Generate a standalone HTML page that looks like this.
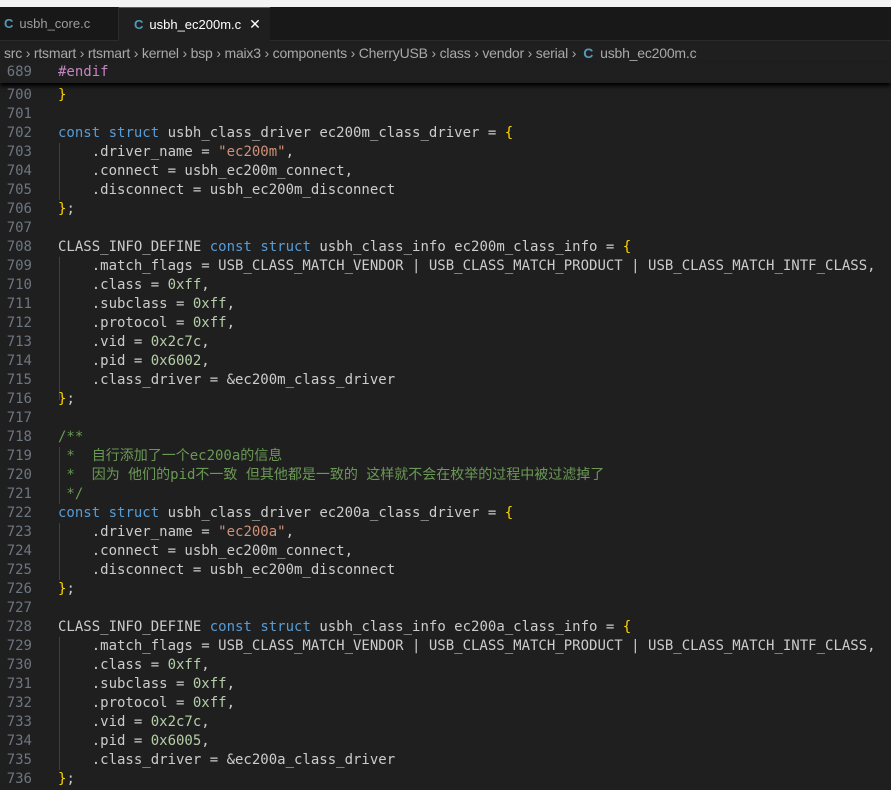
<!DOCTYPE html>
<html><head><meta charset="utf-8"><style>
*{margin:0;padding:0;box-sizing:border-box}
body{width:891px;height:790px;background:#1f1f1f;overflow:hidden;position:relative;font-family:"Liberation Sans","Noto Sans CJK SC",sans-serif}
.top{position:absolute;left:0;top:0;width:891px;height:7px;background:#f3f3f3}
.tabs{position:absolute;left:0;top:7px;width:891px;height:34px;background:#181818;border-bottom:1px solid #2b2b2b}
.tab{position:absolute;top:0;height:34px;font-size:13px;color:#9d9d9d;line-height:34px;padding-left:4px}
.tab b{color:#519aba;font-weight:bold;margin-right:6px}
.t1{left:0;width:119px;border-right:1px solid #2b2b2b}
.t2{left:119px;width:151px;background:#1f1f1f;color:#fff;border-top:1px solid #0078d4;height:35px;padding-left:15px;line-height:33px}
.t2 .x{margin-left:8px;font-size:14px}
.bc{position:absolute;left:0;top:42px;width:891px;height:22px;font-size:14px;color:#a9a9a9;line-height:22px;padding-left:4px;white-space:nowrap;letter-spacing:-0.2px}
.bc b{color:#519aba;margin:0 7px}
.code{position:absolute;left:0;font-family:"DejaVu Sans Mono","Noto Sans CJK SC",monospace;font-size:14px;color:#cccccc}
.l{height:19px;line-height:19px;position:relative;white-space:pre}
.n{position:absolute;left:0;width:32px;text-align:right;color:#6e7681}
.c{position:absolute;left:58px;white-space:pre}
.sticky{position:absolute;left:0;top:63px;width:891px;height:20px;background:#1f1f1f;box-shadow:0 3px 4px #000;z-index:2}
.k{color:#569cd6}.s{color:#ce9178}.m{color:#b5cea8}.y{color:#ffd700}.p{color:#c586c0}.g{color:#6a9955}
.guide{position:absolute;left:59px;width:1px;background:#404040}
</style></head><body>
<div class="top"></div>
<div class="tabs">
<div class="tab t1"><b>C</b>usbh_core.c</div>
<div class="tab t2"><b>C</b>usbh_ec200m.c<span class="x">✕</span></div>
</div>
<div class="bc">src › rtsmart › rtsmart › kernel › bsp › maix3 › components › CherryUSB › class › vendor › serial ›<b>C</b>usbh_ec200m.c</div>
<div class="sticky code"><div class="l" style="top:0"><span class="n">689</span><span class="c p">#endif</span></div></div>
<div class="guide" style="top:143px;height:57px"></div>
<div class="guide" style="top:257px;height:143px"></div>
<div class="guide" style="top:447px;height:57px"></div>
<div class="guide" style="top:523px;height:57px"></div>
<div class="guide" style="top:637px;height:133px"></div>
<div class="code" style="top:86px"><div class="l"><span class="n">700</span><span class="c y">}</span></div><div class="l"><span class="n">701</span><span class="c"></span></div><div class="l"><span class="n">702</span><span class="c"><span class="k">const</span> <span class="k">struct</span> usbh_class_driver ec200m_class_driver = <span class="y">{</span></span></div><div class="l"><span class="n">703</span><span class="c">    .driver_name = <span class="s">"ec200m"</span>,</span></div><div class="l"><span class="n">704</span><span class="c">    .connect = usbh_ec200m_connect,</span></div><div class="l"><span class="n">705</span><span class="c">    .disconnect = usbh_ec200m_disconnect</span></div><div class="l"><span class="n">706</span><span class="c"><span class="y">}</span>;</span></div><div class="l"><span class="n">707</span><span class="c"></span></div><div class="l"><span class="n">708</span><span class="c">CLASS_INFO_DEFINE <span class="k">const</span> <span class="k">struct</span> usbh_class_info ec200m_class_info = <span class="y">{</span></span></div><div class="l"><span class="n">709</span><span class="c">    .match_flags = USB_CLASS_MATCH_VENDOR | USB_CLASS_MATCH_PRODUCT | USB_CLASS_MATCH_INTF_CLASS,</span></div><div class="l"><span class="n">710</span><span class="c">    .class = <span class="m">0xff</span>,</span></div><div class="l"><span class="n">711</span><span class="c">    .subclass = <span class="m">0xff</span>,</span></div><div class="l"><span class="n">712</span><span class="c">    .protocol = <span class="m">0xff</span>,</span></div><div class="l"><span class="n">713</span><span class="c">    .vid = <span class="m">0x2c7c</span>,</span></div><div class="l"><span class="n">714</span><span class="c">    .pid = <span class="m">0x6002</span>,</span></div><div class="l"><span class="n">715</span><span class="c">    .class_driver = &amp;ec200m_class_driver</span></div><div class="l"><span class="n">716</span><span class="c"><span class="y">}</span>;</span></div><div class="l"><span class="n">717</span><span class="c"></span></div><div class="l"><span class="n">718</span><span class="c g">/**</span></div><div class="l"><span class="n">719</span><span class="c g"> *  自行添加了一个ec200a的信息</span></div><div class="l"><span class="n">720</span><span class="c g"> *  因为 他们的pid不一致 但其他都是一致的 这样就不会在枚举的过程中被过滤掉了</span></div><div class="l"><span class="n">721</span><span class="c g"> */</span></div><div class="l"><span class="n">722</span><span class="c"><span class="k">const</span> <span class="k">struct</span> usbh_class_driver ec200a_class_driver = <span class="y">{</span></span></div><div class="l"><span class="n">723</span><span class="c">    .driver_name = <span class="s">"ec200a"</span>,</span></div><div class="l"><span class="n">724</span><span class="c">    .connect = usbh_ec200m_connect,</span></div><div class="l"><span class="n">725</span><span class="c">    .disconnect = usbh_ec200m_disconnect</span></div><div class="l"><span class="n">726</span><span class="c"><span class="y">}</span>;</span></div><div class="l"><span class="n">727</span><span class="c"></span></div><div class="l"><span class="n">728</span><span class="c">CLASS_INFO_DEFINE <span class="k">const</span> <span class="k">struct</span> usbh_class_info ec200a_class_info = <span class="y">{</span></span></div><div class="l"><span class="n">729</span><span class="c">    .match_flags = USB_CLASS_MATCH_VENDOR | USB_CLASS_MATCH_PRODUCT | USB_CLASS_MATCH_INTF_CLASS,</span></div><div class="l"><span class="n">730</span><span class="c">    .class = <span class="m">0xff</span>,</span></div><div class="l"><span class="n">731</span><span class="c">    .subclass = <span class="m">0xff</span>,</span></div><div class="l"><span class="n">732</span><span class="c">    .protocol = <span class="m">0xff</span>,</span></div><div class="l"><span class="n">733</span><span class="c">    .vid = <span class="m">0x2c7c</span>,</span></div><div class="l"><span class="n">734</span><span class="c">    .pid = <span class="m">0x6005</span>,</span></div><div class="l"><span class="n">735</span><span class="c">    .class_driver = &amp;ec200a_class_driver</span></div><div class="l"><span class="n">736</span><span class="c"><span class="y">}</span>;</span></div></div>
</body></html>
